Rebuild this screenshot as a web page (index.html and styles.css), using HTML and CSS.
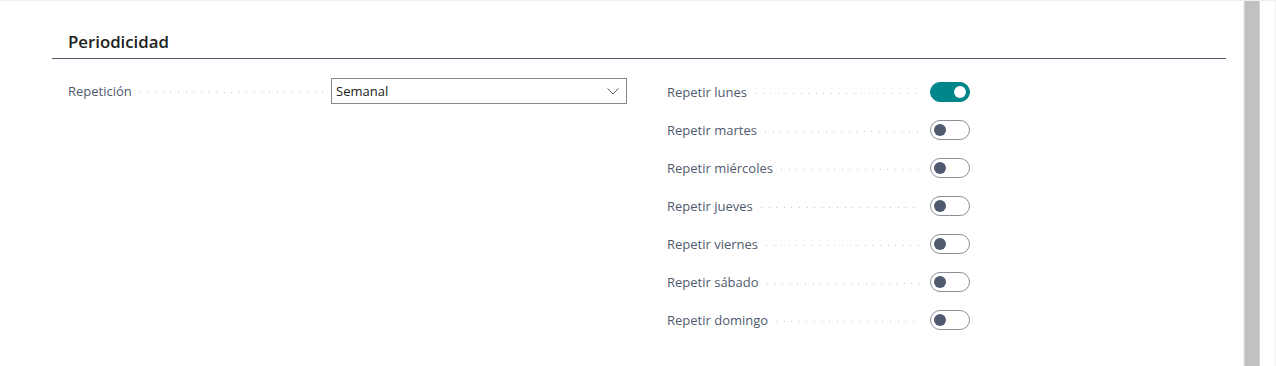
FILE: index.html
```html
<!DOCTYPE html>
<html lang="es">
<head>
<meta charset="utf-8">
<title>Periodicidad</title>
<link rel="stylesheet" href="styles.css">
</head>
<body>
<div class="page">
  <main class="content">
    <section class="group">
      <h2 class="group-title">Periodicidad</h2>
      <div class="columns">
        <div class="col">
          <div class="field">
            <span class="label">Repetición</span>
            <span class="leader"></span>
            <div class="select">
              <span class="select-value">Semanal</span>
              <svg class="chevron" width="12" height="7" viewBox="0 0 12 7"><path d="M0.5 0.5 L6 6 L11.5 0.5" fill="none" stroke="#605e5c" stroke-width="1"/></svg>
            </div>
          </div>
        </div>
        <div class="col col-right">
          <div class="field"><span class="label">Repetir lunes</span><span class="leader"></span><span class="toggle on"><span class="knob"></span></span></div>
          <div class="field"><span class="label">Repetir martes</span><span class="leader"></span><span class="toggle"><span class="knob"></span></span></div>
          <div class="field"><span class="label">Repetir miércoles</span><span class="leader"></span><span class="toggle"><span class="knob"></span></span></div>
          <div class="field"><span class="label">Repetir jueves</span><span class="leader"></span><span class="toggle"><span class="knob"></span></span></div>
          <div class="field"><span class="label">Repetir viernes</span><span class="leader"></span><span class="toggle"><span class="knob"></span></span></div>
          <div class="field"><span class="label">Repetir sábado</span><span class="leader"></span><span class="toggle"><span class="knob"></span></span></div>
          <div class="field"><span class="label">Repetir domingo</span><span class="leader"></span><span class="toggle"><span class="knob"></span></span></div>
        </div>
      </div>
    </section>
  </main>
  <div class="scrollbar"><div class="thumb"></div></div>
  <div class="edge"></div>
</div>
</body>
</html>
```

FILE: styles.css
```css
html, body {
  margin: 0;
  padding: 0;
  background: #ffffff;
}
body {
  font-family: "Open Sans", "Noto Sans", "Liberation Sans", sans-serif;
  color: #212121;
}
.page {
  display: flex;
  width: 1276px;
  height: 366px;
  border-top: 1px solid #f0f0f0;
  box-sizing: border-box;
  overflow: hidden;
}
.content {
  flex: 1;
  padding: 0 18px 0 52px;
}
.group-title {
  margin: 0;
  padding: 30px 0 0 16px;
  height: 27px;
  font-size: 16.8px;
  font-weight: 600;
  line-height: 22px;
  color: #212121;
  border-bottom: 1px solid #505a6e;
}
.columns {
  display: flex;
  gap: 40px;
  padding: 19px 0 0 16px;
}
.col {
  display: flex;
  flex-direction: column;
  gap: 12px;
  width: 303px;
}
.col:first-child {
  width: 559px;
}
.col-right {
  padding-top: 1px;
}
.field {
  display: flex;
  align-items: center;
  height: 26px;
}
.label {
  font-size: 13px;
  color: #505a6e;
  white-space: nowrap;
  padding-right: 8px;
}
.leader {
  flex: 1;
  align-self: center;
  height: 1px;
  margin: 3px 10px 0 0;
  background-image: repeating-linear-gradient(90deg, #c6c6c6 0 1px, transparent 1px 7.6px);
}
.select {
  width: 296px;
  height: 26px;
  box-sizing: border-box;
  border: 1px solid #8a8886;
  display: flex;
  align-items: center;
  justify-content: space-between;
  padding: 0 7px 0 4px;
}
.col:first-child .leader {
  margin-right: 6px;
}
.select-value {
  font-size: 13px;
  color: #212121;
}
.chevron {
  display: block;
}
.toggle {
  width: 40px;
  height: 20px;
  box-sizing: border-box;
  border-radius: 10px;
  border: 1px solid #8a8f99;
  background: #ffffff;
  display: flex;
  align-items: center;
  padding: 0 3px;
}
.toggle .knob {
  width: 12px;
  height: 12px;
  border-radius: 50%;
  background: #505a6e;
}
.toggle.on {
  background: #00858a;
  border-color: #00858a;
  justify-content: flex-end;
}
.toggle.on .knob {
  background: #ffffff;
}
.scrollbar {
  width: 17px;
  background: #f1f1f1;
  display: flex;
  justify-content: center;
  margin-left: -1px;
}
.thumb {
  width: 14px;
  background: #c1c1c1;
  border-left: 1px solid #d4d4d4;
  border-right: 1px solid #d4d4d4;
}
.edge {
  width: 16px;
  background: #ffffff;
  border-right: 1px solid #f3f3f3;
  box-sizing: border-box;
}
```
